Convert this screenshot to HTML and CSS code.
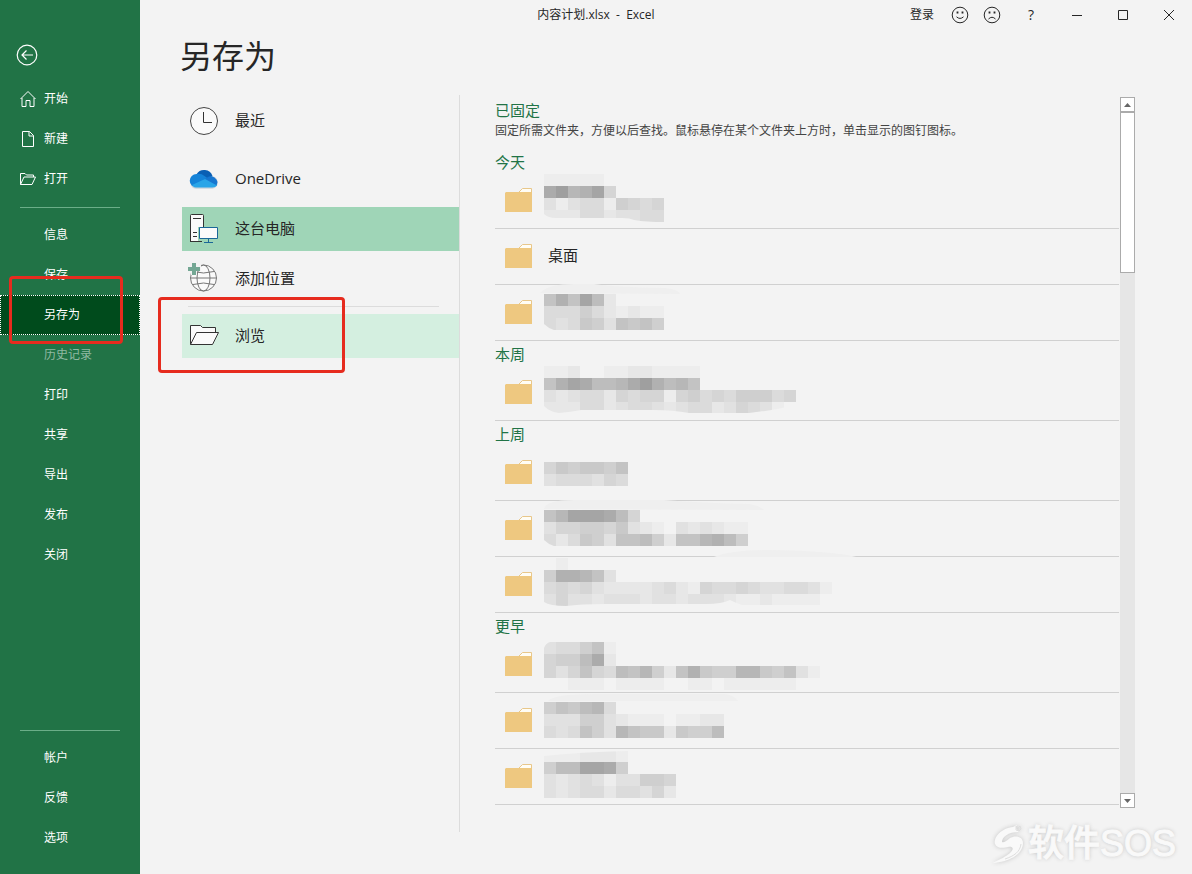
FILE: index.html
```html
<!doctype html>
<html lang="zh-CN">
  <head>
    <meta charset="utf-8">
    <meta name="viewport" content="width=device-width, initial-scale=1">
    <title>内容计划.xlsx - Excel</title>
    <link rel="stylesheet" href="styles.css">
  </head>
  <body>
    <svg class="defs" width="0" height="0" aria-hidden="true">
      <symbol id="folder" viewBox="0 0 27 24">
        <path d="M13 5L17.500 .5H26.500V6H13z" fill="#fffdf5" stroke="#e8c78a"/>
        <path d="M1 4H14L15 4H27V24H0V5z" fill="#eec880"/>
      </symbol>
    </svg>
    <header class="titlebar">
      <div class="doc-title">内容计划.xlsx&nbsp; -&nbsp; Excel</div>
      <div class="window-tools">
        <button class="login">登录</button>
        <button class="face" aria-label="喜欢">
          <svg width="18" height="18" viewBox="0 0 18 18"><circle cx="9" cy="9" r="7.800"/><path d="M6.500 5.500v2M11.500 5.500v2" stroke-width="1.800"/><path d="M5.500 10.800Q9 14 12.500 10.800"/></svg>
        </button>
        <button class="face" aria-label="不喜欢">
          <svg width="18" height="18" viewBox="0 0 18 18"><circle cx="9" cy="9" r="7.800"/><path d="M6.500 5.500v2M11.500 5.500v2" stroke-width="1.800"/><path d="M5.500 13Q9 9.500 12.500 13"/></svg>
        </button>
        <button class="win help">?</button>
        <button class="win" aria-label="最小化"><svg width="12" height="12" viewBox="0 0 12 12"><path d="M1 6.500h10"/></svg></button>
        <button class="win" aria-label="最大化"><svg width="12" height="12" viewBox="0 0 12 12"><path d="M1.500 1.500h9v9h-9z"/></svg></button>
        <button class="win" aria-label="关闭"><svg width="12" height="12" viewBox="0 0 12 12"><path d="M1 1l10 10M11 1L1 11"/></svg></button>
      </div>
    </header>
    <div class="backstage">
      <nav class="sidebar">
        <button class="back" aria-label="返回">
          <svg width="22" height="22" viewBox="0 0 22 22"><circle cx="11" cy="11" r="9.800"/><path d="M17 11H6M10.500 6.500L6 11l4.500 4.500"/></svg>
        </button>
        <button class="nav-item"><svg width="16" height="18" viewBox="0 0 16 18"><path d="M.5 9L8 1.500 15.500 9M2 8v8.500h4V10.500h4v6h4V8"/></svg>开始</button>
        <button class="nav-item"><svg width="16" height="18" viewBox="0 0 16 18"><path d="M2.500 1.500h7l4 4v11h-11zM9 1.500v4.500h4.500"/></svg>新建</button>
        <button class="nav-item"><svg width="16" height="18" viewBox="0 0 16 18"><path d="M.5 14.500v-11h4.500l1.500 1.500h7v2M.5 14.500L4 7h11.500L12 14.500z"/></svg>打开</button>
        <hr>
        <button class="nav-item text">信息</button>
        <button class="nav-item text">保存</button>
        <div class="mark-holder">
          <button class="nav-item text active">另存为</button>
          <span class="mark mark-nav"></span>
        </div>
        <button class="nav-item text" disabled>历史记录</button>
        <button class="nav-item text">打印</button>
        <button class="nav-item text">共享</button>
        <button class="nav-item text">导出</button>
        <button class="nav-item text">发布</button>
        <button class="nav-item text">关闭</button>
        <div class="nav-bottom">
          <hr>
          <button class="nav-item text">帐户</button>
          <button class="nav-item text">反馈</button>
          <button class="nav-item text">选项</button>
        </div>
      </nav>
      <main>
        <h1>另存为</h1>
        <div class="panes">
          <div class="places">
            <button class="place recent">
              <svg width="32" height="32" viewBox="0 0 32 32"><circle cx="16" cy="17" r="13.500" fill="#fafafa" stroke="#444"/><path d="M15.500 8v10.500H24" fill="none" stroke="#333"/></svg>
              最近
            </button>
            <button class="place">
              <svg width="32" height="32" viewBox="0 0 32 32">
                <path d="M8 26a6 6 0 0 1-.8-11.800A9 9 0 0 1 24 13.500a6.300 6.300 0 0 1 .5 12.500z" fill="#c9d3dc" transform="translate(0 .7)"/>
                <path d="M8.500 12.500A8.800 8.800 0 0 1 24.500 14L17 19z" fill="#0a5fb4"/>
                <path d="M8.500 25.500A6.500 6.500 0 0 1 8.500 12q4.500-1 8 2l5 3.500L4 24z" fill="#1583d8"/>
                <path d="M15 18l6-3.500a7 7 0 0 1 8.500 5.500l-1 4z" fill="#1676d0"/>
                <path d="M4 23l13-6 12 6.500q-1.500 2-4.500 2h-16q-3 0-4.500-2.500z" fill="#29a5e8"/>
              </svg>
              OneDrive
            </button>
            <button class="place selected">
              <svg width="32" height="32" viewBox="0 0 32 32" fill="none">
                <path d="M2.500 3.500q0-1 1-1h11q1 0 1 1v26h-13z" fill="#fafafa" stroke="#333"/>
                <path d="M5 6.500h8M5 20.500h4M5 24.500h4" stroke="#333"/>
                <path d="M10 15h21v15H10z" fill="#9fd5b7"/>
                <path d="M2 29.500h12" stroke="#333"/>
                <path d="M11.500 15.500h18v11h-18z" fill="#fafafa" stroke="#1a6798"/><path d="M20.500 27v3M16 30.500h9" stroke="#1a6798"/>
              </svg>
              这台电脑
            </button>
            <button class="place">
              <svg width="32" height="32" viewBox="0 0 32 32" fill="none">
                <g stroke="#777"><circle cx="15.500" cy="16" r="13" fill="#fafafa"/><ellipse cx="15.500" cy="16" rx="6.500" ry="13"/><path d="M2.500 16h26M5 9.500q10.500 3 21 0M5 22.500q10.500-3 21 0"/></g>
                <path d="M3-1h6v4h4v6H9v4H3z" fill="#f3f3f3"/><path d="M4 1h4v4h4v4H8v4H4V9H0V5h4z" fill="#74a794"/>
              </svg>
              添加位置
            </button>
            <hr>
            <div class="mark-holder">
              <button class="place browse">
                <svg width="32" height="32" viewBox="0 0 32 32"><path d="M2.500 25.500v-19h10l2 2h13v5" fill="#fafafa" stroke="#333"/><path d="M2.500 25.500L8.500 13.500h22L24.500 25.500z" fill="#fafafa" stroke="#333"/></svg>
                浏览
              </button>
              <span class="mark mark-browse"></span>
            </div>
          </div>
          <div class="folders">
            <div class="list">
              <h2>已固定</h2>
              <p>固定所需文件夹，方便以后查找。鼠标悬停在某个文件夹上方时，单击显示的图钉图标。</p>
              <h2>今天</h2>
              <div class="row" data-top="1" data-cells="111110 ceabd5 3134416545 2224423344" data-trim="M0 41q4 4 12 4h66q8 0 12 2 12 2 30 2v4H0z"></div>
              <div class="row"><span>桌面</span></div>
              <div class="row" data-top="9" data-cells="8b8d92 4446421211 4347638786" data-trim="M0 39q4 4 10 6v2H0z" data-smear="M-4 8Q4-1 30-1H50Q70 2 120 3Q134 4 136 9z"></div>
              <h2>本周</h2>
              <div class="row" data-top="1" data-cells="1120011221111 8bdc99aceb9a8 323442545515645466645 222442344323442354310" data-trim="M0 41q6 6 15 7 12-1 22-3h72q20 0 36 3h60q20-2 47-8v9H0z"></div>
              <h2>上周</h2>
              <div class="row" data-top="17" data-cells="5767768 3444354"></div>
              <div class="row" data-top="9" data-cells="8adddc95 35566573210323211 4247638896288ab96" data-trim="M0 39q4 4 10 6v2H0z" data-smear="M0 8Q2-1 30-1H120Q160 2 204 3 214 4 220 9z"></div>
              <div class="row" data-top="1" data-cells="01 6bba83 454532222342154454334431 353323332332333211211110" data-trim="M0 45q6 4 22 4 14-2 40-2h100q16 0 24-4 6 3 12 5h90v3H0z" data-smear="M170 0Q186-7 224-7 290-6 312 0z"></div>
              <h2>更早</h2>
              <div class="row" data-top="5" data-cells="344681 5669c2 53585498a628b766aa76831 001110111100110111111" data-trim="M0 5v6q2-5 6-6z"></div>
              <div class="row" data-top="9" data-cells="6879a4 333663211101122 434863a87727669" data-smear="M4 8Q10 1 50 1H180Q190 2 194 8z"></div>
              <div class="row" data-top="1" data-cells="1112221 699ddc6 32343133665 32344244352" data-trim="M0 0h84v2q-48 1-84 5z"></div>
            </div>
            <div class="scrollbar">
              <button aria-label="向上"><svg width="7" height="4" viewBox="0 0 7 4"><path d="M0 4L3.500 0 7 4z"/></svg></button>
              <div class="thumb"></div>
              <button class="down" aria-label="向下"><svg width="7" height="4" viewBox="0 0 7 4"><path d="M0 0h7L3.500 4z"/></svg></button>
            </div>
          </div>
        </div>
      </main>
    </div>
    <div class="watermark">
      <svg width="36" height="40" viewBox="0 0 36 40">
        <path d="M21 3C10 4 1 13 3 20c2 5 9 4 13 3 5-1 6 2 3 5-5 5-11 7-18 11 15-1 30-8 30-20 0-7-8-8-13-5-3 2-5 5-8 4 0-5 6-10 17-10l-3-4 1-3z"/>
        <path d="M24 2l2 2 2-2 1 3-2 2-3-1zM13 35c9-3 15-7 16-15" class="gloss"/>
      </svg>
      <span>软件SOS</span>
    </div>
    <script src="script.js"></script>
  </body>
</html>
```

FILE: styles.css
```css
* {
    box-sizing: border-box;
}
body {
    margin: 0;
    font: 12px/20px "Open Sans", "Noto Sans CJK SC", sans-serif;
    color: #262626;
    background: #f3f3f3;
}
button {
    font: inherit;
    color: inherit;
    background: none;
    border: 0;
    padding: 0;
}
svg {
    display: block;
    flex: none;
}
.defs {
    position: absolute;
}
h1, h2, p, hr {
    margin: 0;
    font-weight: normal;
}
hr {
    border: 0;
    height: 1px;
}

/* title bar */
.titlebar {
    position: absolute;
    top: 0;
    left: 0;
    right: 0;
    display: grid;
    grid-template-columns: 1fr auto 1fr;
    height: 30px;
    line-height: 30px;
}
.doc-title {
    grid-column: 2;
}
.window-tools {
    display: flex;
    justify-content: flex-end;
}
.window-tools button {
    display: flex;
    align-items: center;
    justify-content: center;
}
.window-tools svg {
    fill: none;
    stroke: #262626;
}
.window-tools .login {
    padding: 0 10px;
}
.window-tools .face {
    width: 32px;
}
.window-tools .win {
    width: 46px;
}
.window-tools .help {
    font-size: 14px;
}

/* sidebar */
.backstage {
    display: flex;
    min-height: 100vh;
}
.sidebar {
    display: flex;
    flex-direction: column;
    flex: none;
    width: 140px;
    padding: 44px 0 16px;
    color: #fff;
    background: #217346;
}
.sidebar svg {
    fill: none;
    stroke: #fff;
}
.back {
    align-self: flex-start;
    margin: 0 0 13px 16px;
}
.back svg {
    stroke-width: 1.2;
}
.nav-item {
    display: flex;
    align-items: center;
    gap: 8px;
    width: 100%;
    height: 40px;
    padding: 0 20px;
}
.nav-item.text {
    padding-left: 44px;
}
.nav-item.active {
    background: #004b1c;
    border: 1px dotted #fff;
    padding-left: 43px;
}
.nav-item:disabled {
    color: #90b9a2;
}
.sidebar hr {
    margin: 8px 20px 7px;
    background: #6bae88;
}
.nav-bottom {
    margin-top: auto;
}
.mark-holder {
    position: relative;
}
.mark {
    position: absolute;
    z-index: 1;
    border: 3px solid #e62b1e;
    border-radius: 4px;
    pointer-events: none;
}
.mark-nav {
    top: -19px;
    left: 9px;
    right: 17px;
    bottom: -9px;
}
.mark-browse {
    top: -17px;
    left: -24px;
    right: 114px;
    bottom: -15px;
}

/* content */
main {
    display: flex;
    flex-direction: column;
    flex: 1;
    min-width: 0;
    height: 100vh;
    padding: 32px 57px 42px 42px;
}
h1 {
    font-size: 32px;
    line-height: 48px;
    margin: 0 0 15px -2px;
}
.panes {
    display: flex;
    flex: 1;
    min-height: 0;
}
.places {
    flex: none;
    width: 278px;
    padding-top: 4px;
    border-right: 1px solid #dcdcdc;
}
.place {
    display: flex;
    align-items: center;
    gap: 15px;
    width: 100%;
    height: 44px;
    margin-bottom: 6px;
    padding: 0 0 2px 6px;
    font-size: 15px;
}
.place.recent {
    margin-bottom: 14px;
}
.place.selected {
    background: #9fd5b7;
}
.place.browse {
    margin: 0;
    background: #d4efe0;
}
.places hr {
    margin: -1px 20px 7px 6px;
    background: #dcdcdc;
}
.folders {
    display: flex;
    flex: 1;
    min-width: 0;
    padding: 2px 0 24px 35px;
}
.list {
    flex: 1;
    min-width: 0;
    margin-right: 1px;
    overflow: hidden;
}
h2 {
    height: 24px;
    padding-top: 2px;
    font-size: 15px;
    line-height: 22px;
    color: #217346;
}
.list p {
    height: 28px;
    color: #444;
    white-space: nowrap;
}
.row {
    display: flex;
    align-items: center;
    gap: 12px;
    height: 56px;
    padding: 0 0 2px 10px;
    border-bottom: 1px solid #d0d0d0;
    font-size: 15px;
}
.row span {
    padding: 0 0 2px 4px;
}
.row .blur {
    align-self: flex-start;
    overflow: visible;
}

/* scrollbar */
.scrollbar {
    display: flex;
    flex-direction: column;
    width: 15px;
    background: #e6e6e6;
}
.scrollbar button {
    display: flex;
    align-items: center;
    justify-content: center;
    height: 15px;
    background: #fff;
    border: 1px solid #ababab;
}
.scrollbar svg {
    fill: #666;
}
.scrollbar .down {
    margin-top: auto;
}
.thumb {
    height: 161px;
    background: #fff;
    border: 1px solid #ababab;
}

.watermark {
    position: absolute;
    right: 16px;
    bottom: 10px;
    display: flex;
    align-items: center;
    font: 500 36px/40px "Liberation Sans", "Noto Sans CJK SC", sans-serif;
    color: #f9f9f9;
    text-shadow: 0 0 4px #bbb;
    -webkit-text-stroke: 1px #f9f9f9;
}
.watermark svg {
    fill: #f9f9f9;
    filter: drop-shadow(0 0 2px #c4c4c4);
}
.watermark .gloss {
    fill: none;
    stroke: #dedede;
}
```

FILE: script.js
```js
const CELL = 12;
const NS = 'http://www.w3.org/2000/svg';

const add = (parent, tag, attrs) => {
  const el = document.createElementNS(NS, tag);
  Object.keys(attrs).forEach(k => el.setAttribute(k, attrs[k]));
  parent.appendChild(el);
  return el;
}

document.querySelectorAll('.row').forEach(row => {
  const icon = document.createElementNS(NS, 'svg');
  icon.setAttribute('width', 27);
  icon.setAttribute('height', 24);
  add(icon, 'use', { href: '#folder' });
  row.prepend(icon);
  if (!row.dataset.cells) return;

  // hidden folder names: one hex digit per square, 0 = background, f = darkest
  const svg = add(row, 'svg', { class: 'blur', width: 320, height: 55 });
  if (row.dataset.smear) add(svg, 'path', { d: row.dataset.smear, fill: '#efefef' });
  row.dataset.cells.split(' ').forEach((line, y) => {
    [...line].forEach((c, x) => {
      const n = parseInt(c, 16);
      if (!n) return;
      const grey = 243 - n * 6;
      add(svg, 'rect', {
        x: x * CELL,
        y: Number(row.dataset.top) + y * CELL,
        width: CELL,
        height: CELL,
        fill: `rgb(${grey},${grey},${grey})`
      });
    })
  })
  if (row.dataset.trim) add(svg, 'path', { d: row.dataset.trim, fill: '#f3f3f3' });
})
```
